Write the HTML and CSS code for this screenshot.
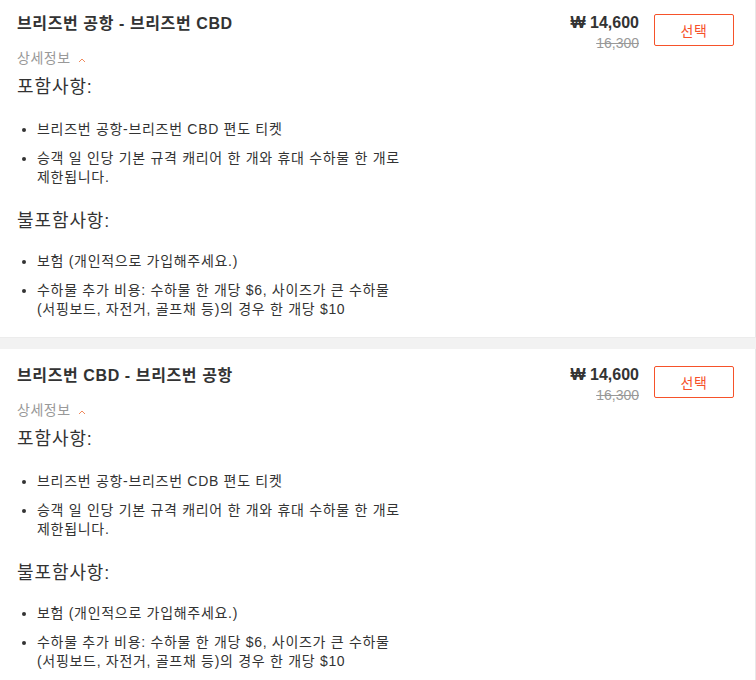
FILE: index.html
```html
<!DOCTYPE html>
<html lang="ko">
<head>
<meta charset="utf-8">
<link rel="stylesheet" href="styles.css">
</head>
<body>
<div class="page">
  <section class="card first">
    <div class="info">
      <h3 class="title">브리즈번 공항 - 브리즈번 CBD</h3>
      <div class="toggle">상세정보 <svg class="caret" width="8" height="6" viewBox="0 0 8 6"><path d="M1 5 L4 2 L7 5" fill="none" stroke="#f08a5d" stroke-width="1"/></svg></div>
      <h4 class="sub">포함사항:</h4>
      <ul class="list">
        <li>브리즈번 공항-브리즈번 CBD 편도 티켓</li>
        <li>승객 일 인당 기본 규격 캐리어 한 개와 휴대 수하물 한 개로 제한됩니다.</li>
      </ul>
      <h4 class="sub">불포함사항:</h4>
      <ul class="list">
        <li>보험 (개인적으로 가입해주세요.)</li>
        <li>수하물 추가 비용: 수하물 한 개당 $6, 사이즈가 큰 수하물 (서핑보드, 자전거, 골프채 등)의 경우 한 개당 $10</li>
      </ul>
    </div>
    <div class="buy">
      <div class="prices">
        <div class="price">₩ 14,600</div>
        <div class="old">16,300</div>
      </div>
      <button class="select">선택</button>
    </div>
  </section>
  <div class="sep"></div>
  <section class="card">
    <div class="info">
      <h3 class="title">브리즈번 CBD - 브리즈번 공항</h3>
      <div class="toggle">상세정보 <svg class="caret" width="8" height="6" viewBox="0 0 8 6"><path d="M1 5 L4 2 L7 5" fill="none" stroke="#f08a5d" stroke-width="1"/></svg></div>
      <h4 class="sub">포함사항:</h4>
      <ul class="list">
        <li>브리즈번 공항-브리즈번 CDB 편도 티켓</li>
        <li>승객 일 인당 기본 규격 캐리어 한 개와 휴대 수하물 한 개로 제한됩니다.</li>
      </ul>
      <h4 class="sub">불포함사항:</h4>
      <ul class="list">
        <li>보험 (개인적으로 가입해주세요.)</li>
        <li>수하물 추가 비용: 수하물 한 개당 $6, 사이즈가 큰 수하물 (서핑보드, 자전거, 골프채 등)의 경우 한 개당 $10</li>
      </ul>
    </div>
    <div class="buy">
      <div class="prices">
        <div class="price">₩ 14,600</div>
        <div class="old">16,300</div>
      </div>
      <button class="select">선택</button>
    </div>
  </section>
</div>
</body>
</html>
```
FILE: styles.css
```css
html, body {
  margin: 0;
  padding: 0;
  background: #fff;
}
body {
  font-family: "Liberation Sans", Arial, "Noto Sans CJK KR", sans-serif;
  color: #333;
  overflow: hidden;
  word-break: keep-all;
}
.page {
  width: 756px;
  margin-top: -3px;
}
.card {
  display: flex;
  justify-content: space-between;
  align-items: flex-start;
  padding: 17px 21px 18px 17px;
  border-right: 1px solid #e8e8e8;
}
.info {
  width: 420px;
}
.title {
  margin: 0;
  font-size: 16px;
  line-height: 20px;
  font-weight: bold;
  letter-spacing: 0.6px;
  color: #333;
}
.toggle {
  margin-top: 15px;
  font-size: 14px;
  line-height: 18px;
  letter-spacing: 0.5px;
  color: #999;
  display: flex;
  align-items: center;
  gap: 7px;
}
.caret {
  margin-top: 4px;
}
.sub {
  margin: 8px 0 0;
  font-size: 18px;
  line-height: 24px;
  font-weight: normal;
  letter-spacing: 0.9px;
  color: #333;
}
.list + .sub {
  margin-top: 22px;
}
.list {
  margin: 21px 0 0;
  padding: 0 0 0 20px;
  font-size: 14px;
  line-height: 19px;
  letter-spacing: 0.7px;
  color: #333;
}
.list + .sub + .list {
  margin-top: 19px;
}
.list li + li {
  margin-top: 10px;
}
.list li::marker {
  font-size: 13px;
}
.buy {
  display: flex;
  align-items: flex-start;
  gap: 15px;
}
.prices {
  text-align: right;
  margin-top: -1px;
}
.price {
  font-size: 16px;
  line-height: 20px;
  font-weight: bold;
  color: #333;
}
.old {
  font-size: 14px;
  line-height: 20px;
  color: #999;
  text-decoration: line-through;
}
.select {
  width: 80px;
  height: 32px;
  background: #fff;
  border: 1px solid #f6522a;
  border-radius: 2px;
  color: #f6522a;
  font-family: inherit;
  font-size: 14px;
  letter-spacing: 0.5px;
  padding: 0;
}
.sep {
  height: 11px;
  background: #f2f2f2;
  border-top: 1px solid #ececec;
}
```
